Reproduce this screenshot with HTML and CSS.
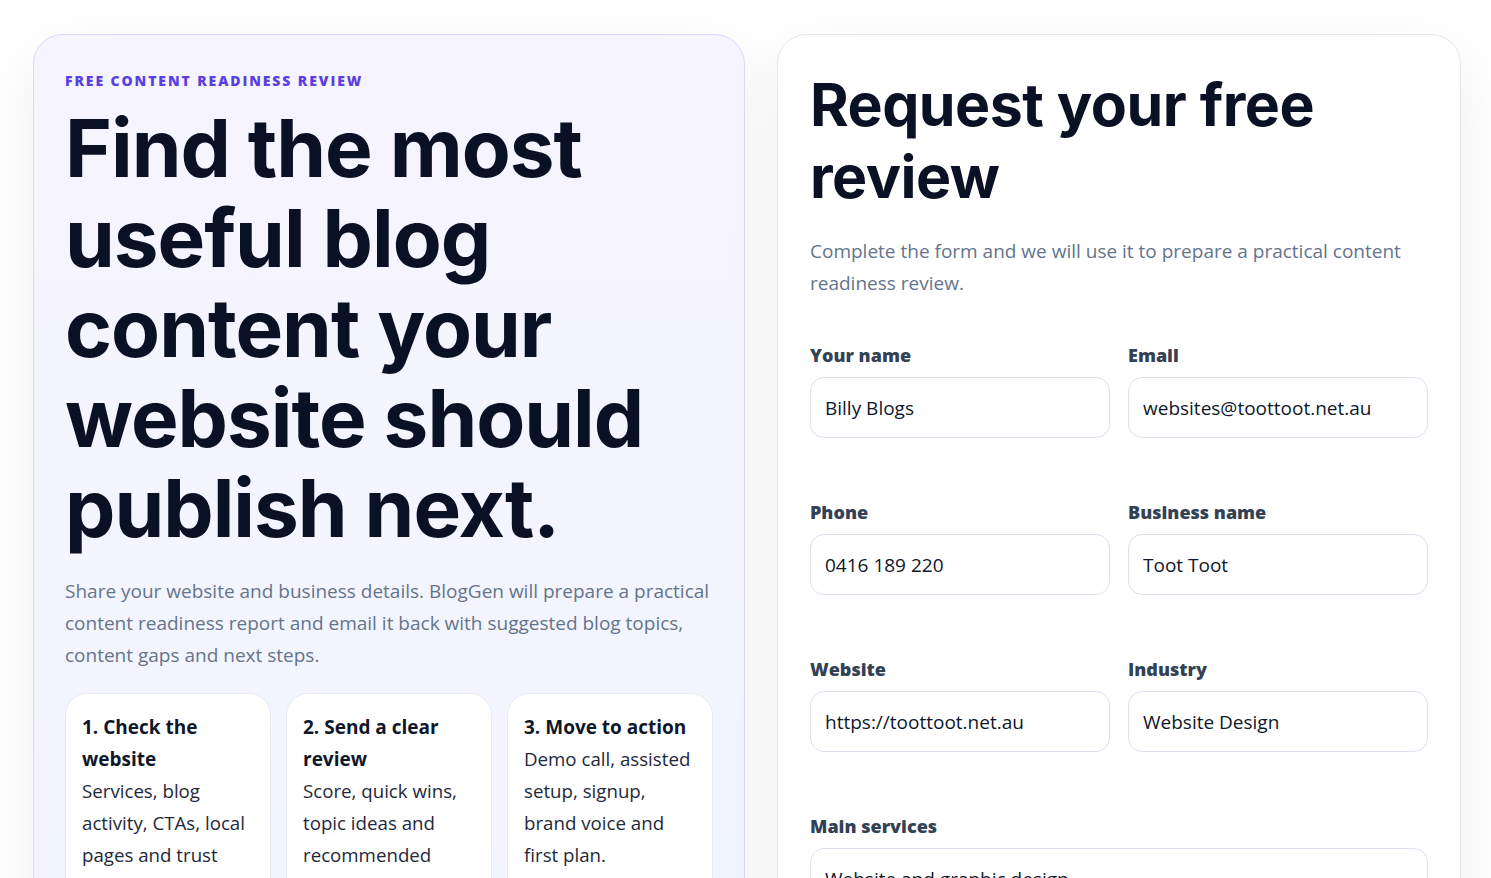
FILE: index.html
```html
<!DOCTYPE html>
<html lang="en">
<head>
    <meta charset="UTF-8">
    <title>Free content readiness review</title>
    <link rel="stylesheet" href="styles.css">
</head>
<body>
    <main class="page">
        <section class="intro-card">
            <p class="eyebrow">Free content readiness review</p>
            <h1>Find the most useful blog content your website should publish next.</h1>
            <p class="lead">Share your website and business details. BlogGen will prepare a practical content readiness report and email it back with suggested blog topics, content gaps and next steps.</p>

            <div class="steps">
                <div class="step">
                    <h3>1. Check the website</h3>
                    <p>Services, blog activity, CTAs, local pages and trust signals.</p>
                </div>
                <div class="step">
                    <h3>2. Send a clear review</h3>
                    <p>Score, quick wins, topic ideas and recommended next steps.</p>
                </div>
                <div class="step">
                    <h3>3. Move to action</h3>
                    <p>Demo call, assisted setup, signup, brand voice and first plan.</p>
                </div>
            </div>
        </section>

        <section class="form-card">
            <h2>Request your free review</h2>
            <p class="lead">Complete the form and we will use it to prepare a practical content readiness review.</p>

            <form id="reviewForm" class="review-form">
                <label class="field">
                    <span>Your name</span>
                    <input type="text" value="Billy Blogs">
                </label>
                <label class="field">
                    <span>Email</span>
                    <input type="email" value="websites@toottoot.net.au">
                </label>
                <label class="field">
                    <span>Phone</span>
                    <input type="tel" value="0416 189 220">
                </label>
                <label class="field">
                    <span>Business name</span>
                    <input type="text" value="Toot Toot">
                </label>
                <label class="field">
                    <span>Website</span>
                    <input type="url" value="https://toottoot.net.au">
                </label>
                <label class="field">
                    <span>Industry</span>
                    <input type="text" value="Website Design">
                </label>
                <label class="field wide">
                    <span>Main services</span>
                    <input type="text" value="Website and graphic design">
                </label>
            </form>
        </section>
    </main>
</body>
</html>
```

FILE: styles.css
```css
/* Общи стилове */
html, body {
    height: 100%;
    overflow: hidden;
}

body {
    font-family: 'Open Sans', 'Segoe UI', sans-serif;
    background-color: #ffffff;
    color: #0f172a;
    margin: 0;
}

* {
    box-sizing: border-box;
}

.page {
    display: grid;
    grid-template-columns: 712fr 684fr;
    gap: 32px;
    padding: 34px 30px 40px 33px;
    align-items: start;
}

.intro-card,
.form-card {
    border-radius: 30px;
    padding: 32px 31px;
    box-shadow: 0 18px 60px rgba(15, 23, 42, 0.06);
}

.intro-card {
    background: linear-gradient(180deg, #f6f4ff 0%, #f1f5ff 100%);
    border: 1px solid #ddd6fe;
}

.form-card {
    background: #ffffff;
    border: 1px solid #e2e8f0;
    padding: 32px 32px;
}

.eyebrow {
    margin: 4px 0 0;
    font-size: 14px;
    font-weight: 800;
    letter-spacing: 1.9px;
    text-transform: uppercase;
    color: #5b3fe0;
}

h1,
h2 {
    font-family: 'Inter', sans-serif;
    font-weight: 650;
    color: #0b1124;
    margin: 0;
}

h1 {
    font-size: 80px;
    line-height: 90px;
    letter-spacing: -1px;
    margin-top: 13px;
}

h2 {
    font-size: 59px;
    line-height: 72px;
    letter-spacing: -0.5px;
    margin-top: 2px;
}

.lead {
    font-size: 19px;
    line-height: 32px;
    color: #64748b;
    margin: 22px 0 0;
}

.form-card .lead {
    margin-top: 22px;
}

/* Стъпки */
.steps {
    display: grid;
    grid-template-columns: repeat(3, 1fr);
    gap: 15px;
    margin-top: 22px;
}

.step {
    background: #ffffff;
    border: 1px solid #e6ebf3;
    border-radius: 22px;
    padding: 17px 19px 20px 16px;
}

.step h3 {
    font-size: 19px;
    line-height: 32px;
    font-weight: 700;
    margin: 0;
    color: #0f172a;
}

.step p {
    font-size: 18.7px;
    line-height: 32px;
    margin: 0;
    color: #1e293b;
}

/* Форма */
.review-form {
    display: grid;
    grid-template-columns: 1fr 1fr;
    column-gap: 18px;
    row-gap: 62px;
    margin-top: 44px;
}

.field {
    display: flex;
    flex-direction: column;
    gap: 10px;
}

.field.wide {
    grid-column: 1 / -1;
}

.field span {
    font-size: 18px;
    line-height: 24px;
    font-weight: 800;
    color: #334155;
}

.field input {
    height: 61px;
    padding: 0 14px;
    border: 1px solid #dbe1ec;
    border-radius: 14px;
    font-family: inherit;
    font-size: 19px;
    color: #0f172a;
    background: #ffffff;
}
```
